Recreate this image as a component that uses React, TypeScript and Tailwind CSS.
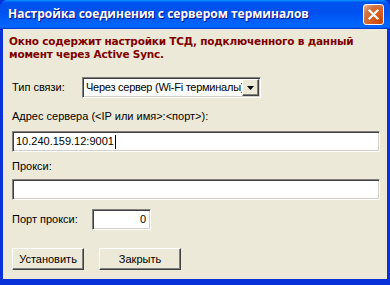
import React from "react";

const sunken =
  "border border-t-[#808080] border-l-[#808080] border-b-white border-r-white shadow-[inset_1px_1px_0_#404040,inset_-1px_-1px_0_#d4d0c8]";
const raised =
  "border border-t-white border-l-white border-b-[#404040] border-r-[#404040] shadow-[inset_-1px_-1px_0_#808080,inset_1px_1px_0_#ece9d8]";

export default function App() {
  return (
    <div className="w-[390px] h-[285px] flex flex-col bg-[#0831d9] font-['Liberation_Sans',Arial,sans-serif] text-[11px] text-black">
      {/* title bar */}
      <div className="h-[29px] shrink-0 rounded-t-[7px] bg-[linear-gradient(180deg,#0997ff,#0053ee_8%,#0050ee_40%,#0066ff_88%,#0066ff_93%,#005bff_95%,#003dd7_96%,#003dd7)] flex items-center pl-[8px] pr-[5px]">
        <div className="flex-1 text-white text-[12px] font-bold font-['Open_Sans',sans-serif] [text-shadow:1px_1px_#0f1089] leading-none -mt-[1px]">
          Настройка соединения с сервером терминалов
        </div>
        <div className="w-[21px] h-[21px] rounded-[3px] border border-white bg-[radial-gradient(circle_at_90%_90%,#cc4600_0%,#dc6527_55%,#cd7546_70%,#e5a07c_90%,#f4d2c0_100%)] flex items-center justify-center mr-[1px] -mt-[1px]">
          <svg width="13" height="13" viewBox="0 0 13 13">
            <path d="M2.5 2.5 L10.5 10.5 M10.5 2.5 L2.5 10.5" stroke="white" strokeWidth="2.2" strokeLinecap="square" />
          </svg>
        </div>
      </div>
      {/* body */}
      <div className="flex-1 mx-[3px] mb-[6px] bg-[#ece9d8] flex flex-col pl-[6px] pr-[7px]">
        <div className="mt-[6px] text-[#800000] font-bold font-['DejaVu_Sans',sans-serif] text-[10.5px] leading-[13px] tracking-[-0.2px]">
          Окно содержит настройки ТСД, подключенного в данный
          <br />
          момент через Active Sync.
        </div>
        <div className="mt-[16px] flex items-center pl-[3px]">
          <div className="w-[70px]">Тип связи:</div>
          <div className={`w-[179px] h-[21px] bg-white flex items-center ${sunken} relative`}>
            <div className="ml-[3px] w-[156px] overflow-hidden whitespace-nowrap tracking-[-0.25px]">Через сервер (Wi-Fi терминалы)</div>
            <div className={`absolute right-[1px] top-[1px] w-[17px] h-[17px] bg-[#ece9d8] ${raised} flex items-center justify-center`}>
              <svg width="7" height="4" viewBox="0 0 7 4">
                <path d="M0 0 H7 L3.5 4 Z" fill="black" />
              </svg>
            </div>
          </div>
        </div>
        <div className="mt-[12px] pl-[3px] leading-[13px]">Адрес сервера (&lt;IP или имя&gt;:&lt;порт&gt;):</div>
        <div className={`mt-[8px] ml-[3px] h-[21px] bg-white flex items-center ${sunken}`}>
          <span className="pl-[3px]">10.240.159.12:9001</span>
          <span className="w-[1px] h-[14px] bg-black ml-[1px]" />
        </div>
        <div className="mt-[8px] pl-[3px] leading-[13px]">Прокси:</div>
        <div className={`mt-[6px] ml-[3px] h-[21px] bg-white ${sunken}`} />
        <div className="mt-[9px] flex items-center pl-[3px]">
          <div className="w-[80px]">Порт прокси:</div>
          <div className={`w-[59px] h-[21px] bg-white flex items-center justify-end pr-[4px] ${sunken}`}>0</div>
        </div>
        <div className="mt-[18px] flex pl-[3px] gap-[15px]">
          <button className={`w-[72px] h-[22px] bg-[#ece9d8] ${raised}`}>Установить</button>
          <button className={`w-[82px] h-[22px] bg-[#ece9d8] ${raised}`}>Закрыть</button>
        </div>
      </div>
    </div>
  );
}
